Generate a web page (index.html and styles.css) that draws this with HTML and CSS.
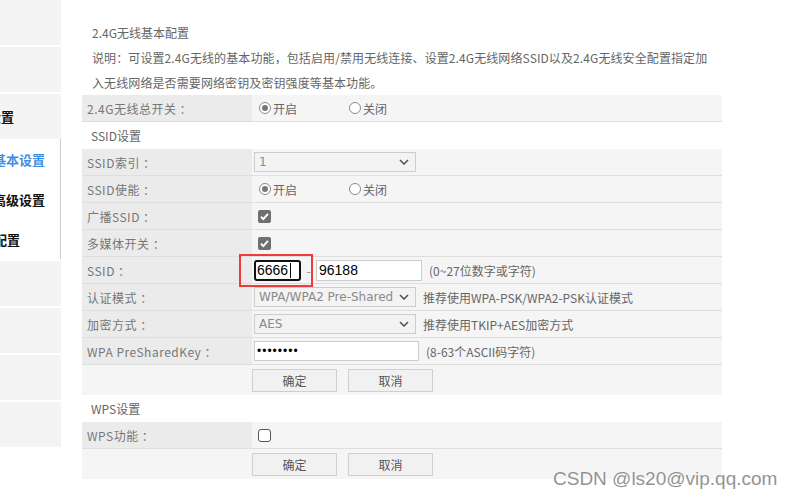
FILE: index.html
```html
<!DOCTYPE html>
<html lang="zh-CN">
<head>
    <meta charset="UTF-8">
    <meta name="viewport" content="width=device-width, initial-scale=1.0">
    <title>2.4G无线基本配置</title>
    <link rel="stylesheet" href="styles.css">
</head>
<body>
    <div class="page">
        <!-- left navigation, scrolled so only the tail of each label shows -->
        <aside class="sidebar">
            <div class="nav-item"></div>
            <div class="nav-item"></div>
            <div class="nav-item"><span class="nav-text nav-text--tail">无线设置</span></div>
            <div class="nav-group">
                <div class="sub-item active"><span class="nav-text nav-text--wide">基本设置</span></div>
                <div class="sub-item"><span class="nav-text nav-text--wide">高级设置</span></div>
                <div class="sub-item"><span class="nav-text nav-text--short">安全配置</span></div>
            </div>
            <div class="nav-item"></div>
            <div class="nav-item"></div>
            <div class="nav-item"></div>
            <div class="nav-item"></div>
        </aside>

        <main class="content">
            <h2 class="page-title">2.4G无线基本配置</h2>
            <p class="desc">说明：可设置2.4G无线的基本功能，包括启用/禁用无线连接、设置2.4G无线网络SSID以及2.4G无线安全配置指定加<br>入无线网络是否需要网络密钥及密钥强度等基本功能。</p>

            <div class="cfg">
                <div class="row">
                    <div class="label">2.4G无线总开关 ：</div>
                    <div class="value">
                        <label class="radio"><span class="radio-dot checked"></span>开启</label>
                        <label class="radio"><span class="radio-dot"></span>关闭</label>
                    </div>
                </div>

                <div class="section-row">SSID设置</div>

                <div class="row">
                    <div class="label">SSID索引 ：</div>
                    <div class="value">
                        <div class="select"><span>1</span><svg class="chevron" width="10" height="6" viewBox="0 0 10 6"><path d="M1 1l4 4 4-4" fill="none" stroke="#555" stroke-width="1.6"/></svg></div>
                    </div>
                </div>
                <div class="row">
                    <div class="label">SSID使能 ：</div>
                    <div class="value">
                        <label class="radio"><span class="radio-dot checked"></span>开启</label>
                        <label class="radio"><span class="radio-dot"></span>关闭</label>
                    </div>
                </div>
                <div class="row">
                    <div class="label">广播SSID ：</div>
                    <div class="value">
                        <span class="checkbox checked"><svg width="13" height="13" viewBox="0 0 13 13"><path d="M3 6.8l2.3 2.3L10 3.8" fill="none" stroke="#fff" stroke-width="2"/></svg></span>
                    </div>
                </div>
                <div class="row">
                    <div class="label">多媒体开关 ：</div>
                    <div class="value">
                        <span class="checkbox checked"><svg width="13" height="13" viewBox="0 0 13 13"><path d="M3 6.8l2.3 2.3L10 3.8" fill="none" stroke="#fff" stroke-width="2"/></svg></span>
                    </div>
                </div>
                <div class="row">
                    <div class="label">SSID ：</div>
                    <div class="value">
                        <span class="ssid-box">
                            <input class="text-input ssid-prefix" type="text" value="6666">
                            <span class="caret"></span>
                            <span class="mark"></span>
                        </span>
                        <span class="dash">-</span>
                        <input class="text-input ssid-suffix" type="text" value="96188">
                        <span class="hint">(0~27位数字或字符)</span>
                    </div>
                </div>
                <div class="row">
                    <div class="label">认证模式 ：</div>
                    <div class="value">
                        <div class="select"><span>WPA/WPA2 Pre-Shared Key</span><svg class="chevron" width="10" height="6" viewBox="0 0 10 6"><path d="M1 1l4 4 4-4" fill="none" stroke="#555" stroke-width="1.6"/></svg></div>
                        <span class="hint">推荐使用WPA-PSK/WPA2-PSK认证模式</span>
                    </div>
                </div>
                <div class="row">
                    <div class="label">加密方式 ：</div>
                    <div class="value">
                        <div class="select"><span>AES</span><svg class="chevron" width="10" height="6" viewBox="0 0 10 6"><path d="M1 1l4 4 4-4" fill="none" stroke="#555" stroke-width="1.6"/></svg></div>
                        <span class="hint">推荐使用TKIP+AES加密方式</span>
                    </div>
                </div>
                <div class="row">
                    <div class="label">WPA PreSharedKey ：</div>
                    <div class="value">
                        <input class="text-input psk" type="password" value="12345678">
                        <span class="hint">(8-63个ASCII码字符)</span>
                    </div>
                </div>
                <div class="button-row">
                    <button type="button" class="btn">确定</button>
                    <button type="button" class="btn">取消</button>
                </div>

                <div class="section-row">WPS设置</div>

                <div class="row">
                    <div class="label">WPS功能 ：</div>
                    <div class="value">
                        <span class="checkbox"></span>
                    </div>
                </div>
                <div class="button-row">
                    <button type="button" class="btn">确定</button>
                    <button type="button" class="btn">取消</button>
                </div>
            </div>
        </main>

        <div class="watermark">CSDN @ls20@vip.qq.com</div>
    </div>
</body>
</html>
```

FILE: styles.css
```css
body {
    margin: 0;
    background: #fff;
    font-family: "Noto Sans CJK SC", "Liberation Sans", sans-serif;
    font-size: 12px;
    color: #777;
}

.page {
    display: flex;
    align-items: flex-start;
    height: 500px;
    overflow: hidden;
}

/* sidebar */
.sidebar {
    width: 61px;
    flex-shrink: 0;
    display: flex;
    flex-direction: column;
    gap: 2px;
    overflow: hidden;
}

.nav-item {
    height: 45px;
    background: #f4f4f4;
    display: flex;
    align-items: center;
}

.nav-group {
    height: 120px;
    margin-top: -2px;
    border-right: 1px solid #cfcfcf;
    background: #fff;
}

.sub-item {
    height: 40px;
    display: flex;
    align-items: center;
}

.nav-text {
    font-size: 13px;
    font-weight: bold;
    color: #111;
    white-space: nowrap;
}

.nav-text--tail { margin-left: -38px; }
.nav-text--wide { margin-left: -7px; }
.nav-text--short { margin-left: -32px; }

.sub-item.active .nav-text { color: #3f8fe8; }

/* main area */
.content {
    width: 640px;
    margin-left: 21px;
    padding-top: 20px;
}

.page-title {
    margin: 0;
    padding-left: 10px;
    font-size: 12px;
    font-weight: normal;
    line-height: 25px;
    color: #666;
}

.desc {
    margin: 0;
    padding-left: 10px;
    line-height: 25px;
    white-space: nowrap;
    letter-spacing: 0.1px;
    color: #666;
}

.row {
    display: flex;
    height: 26px;
    border-bottom: 1px solid #dedede;
}

.label {
    width: 165px;
    padding-left: 5px;
    background: #ebebeb;
    display: flex;
    align-items: center;
    white-space: nowrap;
    letter-spacing: 0.5px;
}

.value {
    flex: 1;
    background: #f5f5f5;
    display: flex;
    align-items: center;
    padding-left: 2px;
}

.section-row {
    height: 27px;
    padding-left: 9px;
    display: flex;
    align-items: center;
    color: #666;
}

.button-row {
    height: 30px;
    padding-left: 170px;
    background: #f5f5f5;
    display: flex;
    align-items: center;
    gap: 11px;
}

.btn {
    width: 85px;
    height: 23px;
    margin: 0;
    padding: 0;
    border: 1px solid #cfcfcf;
    background: #f1f1f1;
    font-family: inherit;
    font-size: 12px;
    color: #555;
}

/* radios and checkboxes */
.radio {
    width: 90px;
    display: flex;
    align-items: center;
    gap: 2px;
    margin-left: 5px;
    color: #666;
}

.radio + .radio { margin-left: 0; }

.radio-dot {
    box-sizing: border-box;
    width: 12px;
    height: 12px;
    border: 1px solid #8a8a8a;
    border-radius: 50%;
    background: #fff;
    display: flex;
    align-items: center;
    justify-content: center;
}

.radio-dot.checked::after {
    content: "";
    width: 6px;
    height: 6px;
    border-radius: 50%;
    background: #777;
}

.checkbox {
    box-sizing: border-box;
    width: 13px;
    height: 13px;
    margin-left: 4px;
    border: 1px solid #555;
    border-radius: 3px;
    background: #fff;
    display: block;
}

.checkbox.checked {
    border: none;
    border-radius: 2px;
    background: #6f6f6f;
}

.checkbox svg { display: block; }

/* fields */
.select {
    box-sizing: border-box;
    width: 162px;
    height: 20px;
    padding: 0 6px 0 4px;
    border: 1px solid #cdcdcd;
    background: #f3f3f3;
    display: flex;
    align-items: center;
    gap: 2px;
    font-family: "DejaVu Sans", sans-serif;
    font-size: 12px;
    color: #8a8a8a;
    overflow: hidden;
    white-space: nowrap;
}

.select span {
    flex: 1;
    overflow: hidden;
}

.chevron { flex-shrink: 0; }

.text-input {
    box-sizing: border-box;
    height: 21px;
    margin: 0;
    padding: 0 2px;
    border: 1px solid #cdcdcd;
    background: #fff;
    font-family: "Liberation Sans", sans-serif;
    font-size: 14px;
    color: #000;
    outline: none;
}

.ssid-box {
    position: relative;
    display: flex;
}

.ssid-prefix {
    width: 47px;
    border: 2px solid #111;
    border-radius: 3px;
    padding: 0 1px;
}

.caret {
    position: absolute;
    left: 36px;
    top: 3px;
    width: 1px;
    height: 15px;
    background: #000;
}

.mark {
    position: absolute;
    left: -15px;
    top: -6px;
    width: 74px;
    height: 33px;
    box-sizing: border-box;
    border: 2px solid #ef3b3b;
}

.dash {
    width: 15px;
    text-align: center;
    color: #888;
}

.ssid-suffix { width: 106px; }

.psk {
    width: 165px;
    height: 20px;
    font-size: 12px;
    letter-spacing: 1px;
}

.hint {
    margin-left: 7px;
    color: #666;
    white-space: nowrap;
}

.watermark {
    position: absolute;
    left: 553px;
    top: 468px;
    font-family: "Liberation Sans", sans-serif;
    font-size: 19px;
    color: #939393;
    text-shadow: 0 0 2px #fff, 0 0 2px #fff;
    white-space: nowrap;
}
```
